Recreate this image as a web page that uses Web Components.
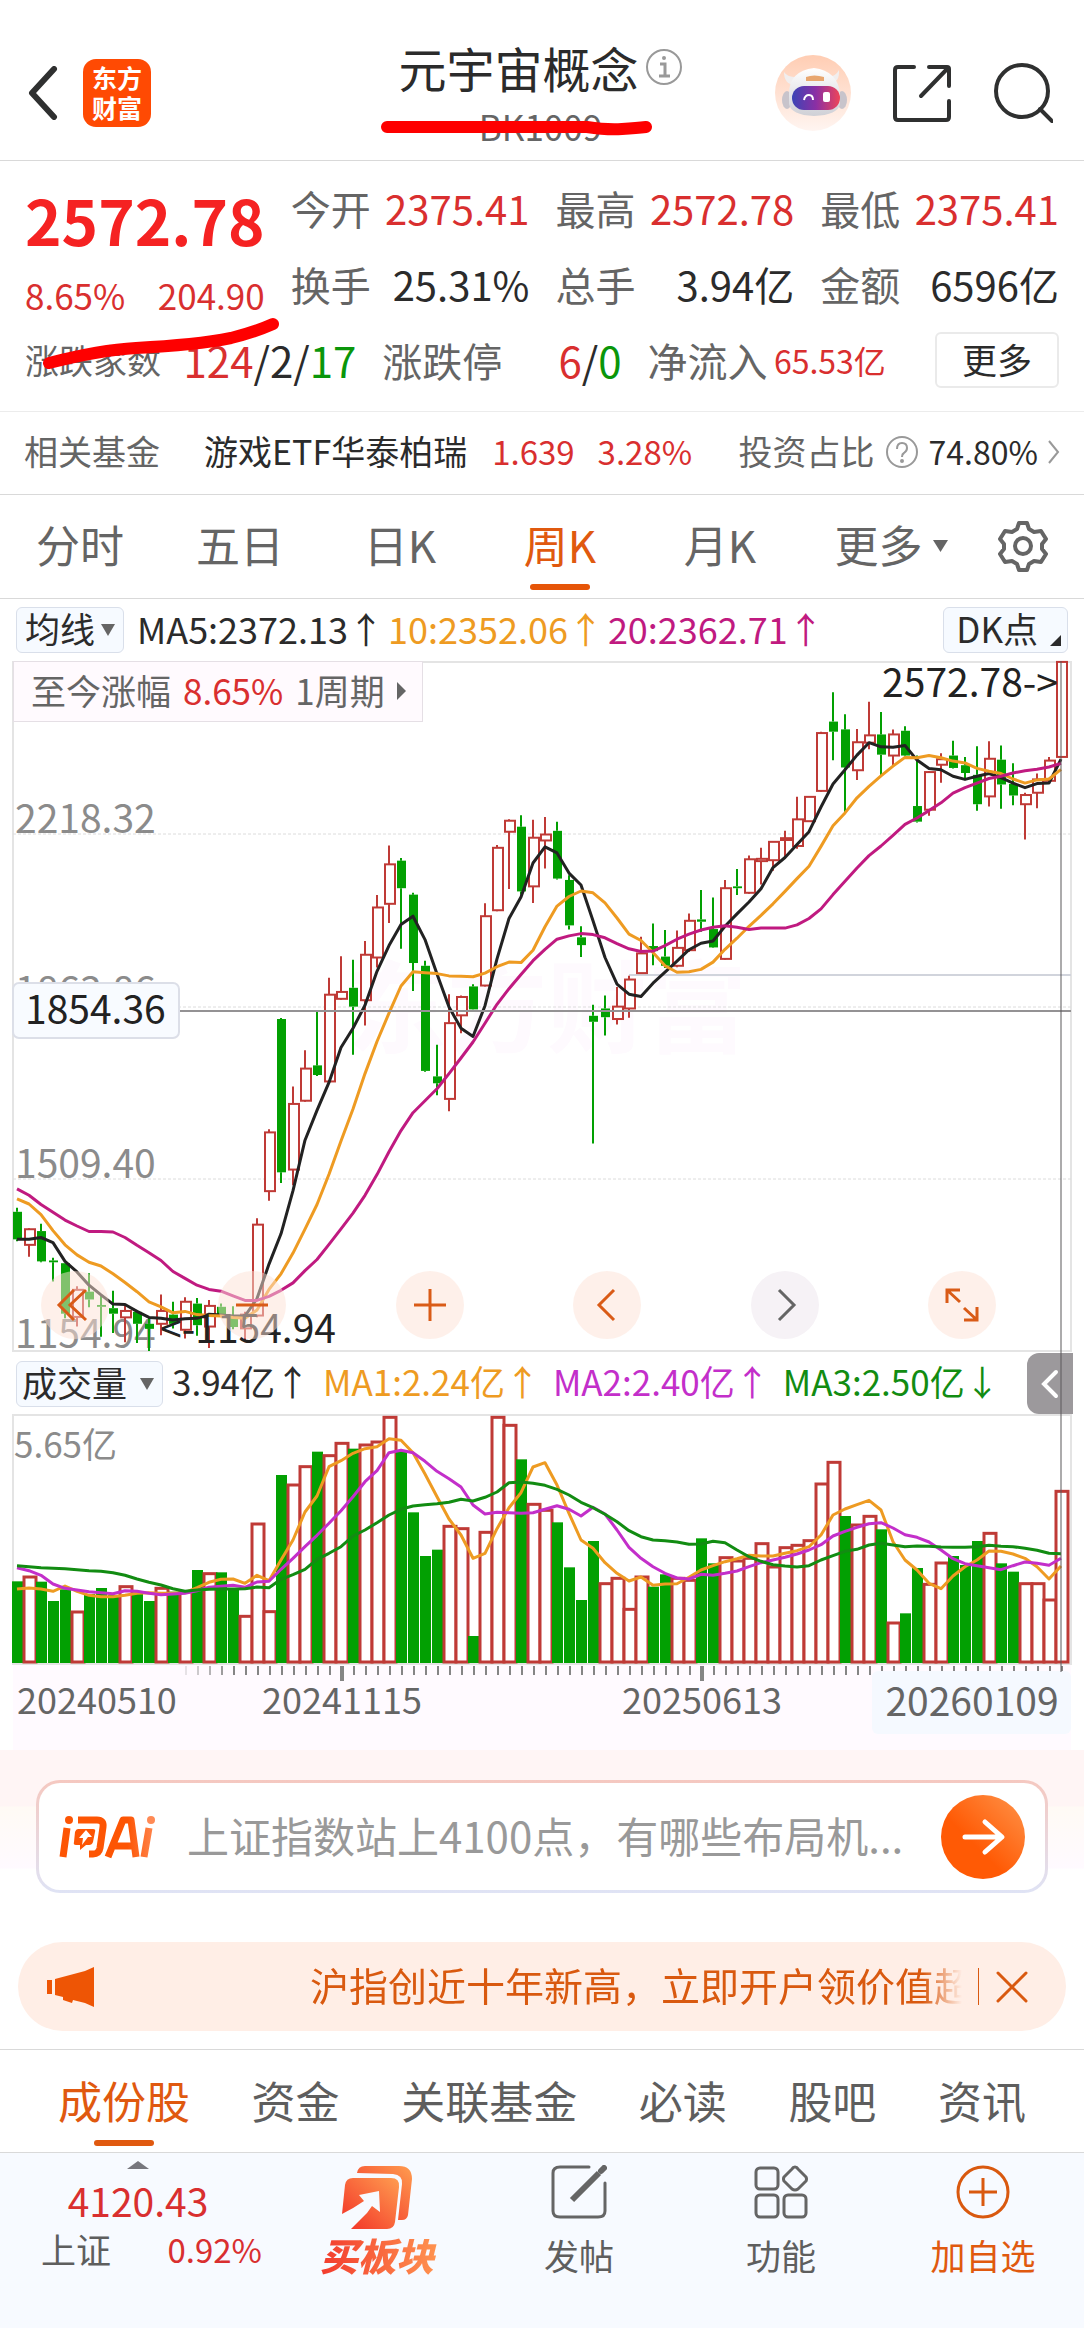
<!DOCTYPE html>
<html lang="zh-CN">
<head>
<meta charset="UTF-8">
<meta name="viewport" content="width=device-width, initial-scale=1">
<title>元宇宙概念</title>
<style>
    :root {
        --up: #d92f2f;
        --down: #0a960a;
        --text: #2b2b2b;
        --muted: #656565;
        --accent: #e0590f;
        --line: #d9d9d9;
    }

    body {
        margin: 0;
        background: #fff;
        color: var(--text);
        font-family: "Noto Sans CJK SC", sans-serif;
    }
</style>
</head>
<body>
<app-header code="BK1009">元宇宙概念</app-header>
<quote-board></quote-board>
<fund-strip></fund-strip>
<period-tabs></period-tabs>
<kline-panel></kline-panel>
<ask-bar></ask-bar>
<promo-bar>沪指创近十年新高，立即开户领价值超</promo-bar>
<section-tabs></section-tabs>
<bottom-bar></bottom-bar>

<script>
const RESET = `
    * { box-sizing: border-box; }
    button { font: inherit; color: inherit; background: none; border: 0; margin: 0; padding: 0; cursor: pointer; }
    a { color: inherit; text-decoration: none; }
    svg { display: block; flex: none; }
    .up { color: var(--up); }
    .down { color: var(--down); }
`;

class BaseElement extends HTMLElement {
    constructor() {
        super();
        this.shadow = this.attachShadow({ mode: 'open' });
    }

    connectedCallback() {
        this.shadow.innerHTML = `<style>${RESET}${this.styles()}</style>${this.render()}`;
    }

    styles() { return ''; }
    render() { return ''; }
}

class AppHeader extends BaseElement {
    styles() {
        return `
            :host { display: block; border-bottom: 1px solid var(--line); }
            header { display: grid; grid-template-columns: 1fr auto 1fr; height: 160px; padding: 0 31px 0 28px; }
            .side { display: flex; align-items: center; height: 186px; gap: 25px; }
            .side.right { justify-content: flex-end; gap: 41px; }
            .logo {
                display: grid; place-content: center; width: 68px; height: 68px; border-radius: 13px; padding-bottom: 2px;
                background: #ff4a03; color: #fff; font-size: 25px; line-height: 30px; font-weight: bold;
            }
            .middle { position: relative; text-align: center; padding-top: 37px; }
            h1 { display: flex; align-items: center; gap: 6px; margin: 0; font-size: 48px; line-height: 60px; font-weight: 400; }
            p { margin: 0; font-size: 35px; line-height: 58px; color: var(--muted); }
            .pen { position: absolute; left: -18px; top: 115px; }
        `;
    }

    render() {
        return `
            <header>
                <div class="side">
                    <button aria-label="返回"><svg width="30" height="54" viewBox="0 0 30 54" fill="none" stroke="#2f3030" stroke-width="6" stroke-linecap="round" stroke-linejoin="round"><path d="M26 3 4 27l22 24"/></svg></button>
                    <div class="logo">东方<br>财富</div>
                </div>
                <div class="middle">
                    <h1><slot></slot><svg width="38" height="38" viewBox="0 0 38 38" fill="none" stroke="#999" stroke-width="2"><circle cx="19" cy="19" r="17"/><path d="M15 16h5v12M14 28h11" stroke-width="3"/><circle cx="19" cy="10" r="1" fill="#999"/></svg></h1>
                    <p>${this.getAttribute('code')}</p>
                    <svg class="pen" width="274" height="24" viewBox="0 0 274 24" fill="none" stroke="#fe0000" stroke-width="12" stroke-linecap="round"><path d="M7 12h200q20 3 35 2t24-2"/></svg>
                </div>
                <div class="side right">
                    <svg width="76" height="76" viewBox="0 0 76 76">
                        <defs>
                            <linearGradient id="halo" x1="0" y1="0" x2="0" y2="1"><stop offset="0" stop-color="#ffcdb3"/><stop offset="1" stop-color="#fff5f1"/></linearGradient>
                            <linearGradient id="visor"><stop offset="0" stop-color="#3b45b6"/><stop offset=".5" stop-color="#8b2fa4"/><stop offset="1" stop-color="#ef4558"/></linearGradient>
                            <linearGradient id="shell" x1="0" y1="0" x2="0" y2="1"><stop offset="0" stop-color="#fff"/><stop offset="1" stop-color="#cfd0d6"/></linearGradient>
                        </defs>
                        <circle cx="38" cy="38" r="38" fill="url(#halo)"/>
                        <ellipse cx="12" cy="45" rx="5" ry="9" fill="#c8c4cb"/><ellipse cx="67" cy="45" rx="5" ry="9" fill="#c8c4cb"/>
                        <path d="M9 17q0 12 10 13l6-9Q14 24 9 17zM64 15q1 12-9 14l-5-7q10 1 14-7z" fill="#f1eeee"/>
                        <path d="M14 39q0-23 25-26 24 3 26 26v10q-2 11-26 12-23-1-25-12z" fill="url(#shell)"/>
                        <path d="M31 22q8-3 18 0v4H31z" fill="#e8a66f"/>
                        <rect x="17" y="31" width="48" height="24" rx="12" fill="url(#visor)"/>
                        <path d="M29 45q1-5 5-5t4 5" fill="none" stroke="#fff" stroke-width="2"/>
                        <rect x="48" y="37" width="7" height="10" rx="2" fill="#fff"/>
                    </svg>
                    <button aria-label="分享"><svg width="60" height="60" viewBox="0 0 60 60" fill="none" stroke="#2f3030" stroke-width="4" stroke-linecap="round" stroke-linejoin="round"><path d="M22 4H6Q3 4 3 7v47q0 3 3 3h48q3 0 3-3V38M37 4h18q2 0 2 2v17M56 5 29 33"/></svg></button>
                    <button aria-label="搜索"><svg width="60" height="60" viewBox="0 0 60 60" fill="none" stroke="#2f3030" stroke-width="4" stroke-linecap="round"><circle cx="29" cy="28" r="26"/><path d="M47 46l12 12"/></svg></button>
                </div>
            </header>
        `;
    }
}

class QuoteBoard extends BaseElement {
    styles() {
        return `
            :host { display: block; position: relative; padding: 9px 25px 13px 25px; border-bottom: 1px solid #ececec; }
            .top { display: grid; grid-template-columns: repeat(4, 1fr); column-gap: 26px; }
            .price { grid-row: span 2; }
            .last { font-size: 62px; line-height: 98px; font-weight: bold; color: #f52222; white-space: nowrap; }
            .change { display: flex; justify-content: space-between; font-size: 35px; line-height: 54px; color: var(--up); }
            dl { display: flex; justify-content: space-between; margin: 0; font-size: 40px; line-height: 76px; white-space: nowrap; }
            dt { color: var(--muted); }
            dd { margin: 0; }
            .bottom { display: grid; grid-template-columns: 331fr 239fr 238fr 147fr; column-gap: 26px; align-items: center; }
            .bottom dd { font-size: 42px; }
            .bottom dt.small { font-size: 34px; }
            .bottom dd.small { font-size: 32px; }
            .more { justify-self: end; width: 124px; height: 56px; padding-bottom: 2px; border: 2px solid #eaeaea; border-radius: 6px; font-size: 35px; line-height: 50px; }
            .pen { position: absolute; left: 40px; top: 152px; }
        `;
    }

    render() {
        const cells = [
            ['今开', '2375.41', 'up'], ['最高', '2572.78', 'up'], ['最低', '2375.41', 'up'],
            ['换手', '25.31%', ''], ['总手', '3.94亿', ''], ['金额', '6596亿', '']
        ];
        return `
            <div class="top">
                <div class="price">
                    <div class="last">2572.78</div>
                    <div class="change"><span>8.65%</span><span>204.90</span></div>
                </div>
                ${cells.map(([label, value, cls]) => `<dl><dt>${label}</dt><dd class="${cls}">${value}</dd></dl>`).join('')}
            </div>
            <div class="bottom">
                <dl><dt class="small">涨跌家数</dt><dd><span class="up">124</span>/2/<span class="down">17</span></dd></dl>
                <dl><dt>涨跌停</dt><dd><span class="up">6</span>/<span class="down">0</span></dd></dl>
                <dl><dt>净流入</dt><dd class="up small">65.53亿</dd></dl>
                <button class="more">更多</button>
            </div>
            <svg class="pen" width="246" height="64" viewBox="0 0 246 64" fill="none" stroke="#fe0000" stroke-width="12" stroke-linecap="round" stroke-linejoin="round"><path d="M9 50Q60 37 96 35q60-3 95-10 24-6 42-14"/></svg>
        `;
    }
}

class FundStrip extends BaseElement {
    styles() {
        return `
            :host { display: block; border-bottom: 1px solid var(--line); }
            a { display: flex; align-items: center; height: 82px; padding: 0 24px 5px; font-size: 34px; line-height: 48px; white-space: nowrap; }
            .name { margin: 0 25px 0 44px; }
            .num { font-size: 33px; }
            .change { margin-left: 23px; }
            .label { color: var(--muted); }
            .ratio { display: flex; align-items: center; gap: 10px; margin-left: auto; }
            .ratio svg { margin-top: 3px; }
            .ratio .num { font-size: 32px; }
        `;
    }

    render() {
        return `
            <a href="#">
                <span class="label">相关基金</span>
                <span class="name">游戏ETF华泰柏瑞</span>
                <span class="num up">1.639</span>
                <span class="num up change">3.28%</span>
                <span class="ratio">
                    <span class="label">投资占比</span>
                    <svg width="34" height="34" viewBox="0 0 34 34" fill="none" stroke="#999" stroke-width="2"><circle cx="17" cy="17" r="15"/><path d="M12 14q0-6 5-6t5 5q0 3-3 5-2 1-2 4"/><circle cx="17" cy="26" r="1"/></svg>
                    <span class="num">74.80%</span>
                    <svg width="12" height="24" viewBox="0 0 12 24" fill="none" stroke="#999" stroke-width="2"><path d="M1 1l9 11-9 11"/></svg>
                </span>
            </a>
        `;
    }
}

class PeriodTabs extends BaseElement {
    styles() {
        return `
            :host { display: block; border-bottom: 1px solid var(--line); }
            nav { display: grid; grid-template-columns: repeat(5, 160fr) 182fr 82fr; height: 103px; padding-right: 20px; font-size: 44px; color: var(--muted); }
            button { position: relative; display: flex; align-items: center; justify-content: center; gap: 10px; padding-bottom: 5px; white-space: nowrap; }
            button svg { margin-top: 3px; }
            .active { color: var(--accent); }
            .active::after { content: ""; position: absolute; bottom: 8px; width: 60px; height: 6px; border-radius: 3px; background: #e65508; }
        `;
    }

    render() {
        const tabs = ['分时', '五日', '日K', '周K', '月K'];
        return `
            <nav>
                ${tabs.map(t => `<button class="${t === '周K' ? 'active' : ''}">${t}</button>`).join('')}
                <button>更多<svg width="15" height="12" viewBox="0 0 15 12" fill="#656565"><path d="M0 0h15L7.500 12z"/></svg></button>
                <button aria-label="设置"><svg width="52" height="52" viewBox="0 0 52 52" fill="none" stroke="#656565" stroke-width="4" stroke-linejoin="round"><path d="M22 3h8l2 6 5 3 7-1 5 8-4 5v5l4 5-5 8-7-1-5 3-2 6h-8l-2-6-5-3-7 1-5-8 4-5v-5l-4-5 5-8 7 1 5-3z"/><circle cx="26" cy="26" r="8"/></svg></button>
            </nav>
        `;
    }
}

// Candles: direction (u/d), high, body top, body bottom, low
const CANDLES = `
d 1217 1226 1286 1290|u 1262 1264 1298 1324|d 1252 1268 1334 1336|d 1326 1332 1336 1378|d 1338 1338 1448 1458
u 1388 1396 1455 1476|d 1360 1400 1417 1434|d 1408 1429 1433 1498|d 1398 1436 1448 1490|u 1430 1442 1456 1510
d 1440 1444 1470 1512|d 1455 1470 1481 1529|u 1406 1442 1470 1495|d 1422 1450 1470 1480|u 1412 1422 1483 1502
d 1414 1426 1473 1496|u 1418 1431 1476 1523|d 1426 1433 1450 1455|d 1432 1455 1477 1482|u 1444 1450 1480 1510
u 1240 1254 1452 1456|u 1046 1053 1181 1202|d 804 806 1140 1163|u 953 991 1134 1168|u 874 914 984 986
d 787 907 928 930|u 716 753 942 944|u 669 747 762 764|d 677 738 779 884|u 636 666 765 820
u 536 563 672 694|u 428 469 555 597|d 455 461 521 653|d 531 535 684 745|d 679 690 919 921
d 862 931 946 972|u 752 815 980 1007|u 755 758 798 837|d 730 735 785 786|u 554 582 733 735
u 427 433 569 571|u 371 374 398 523|d 362 387 528 535|u 372 411 517 553|u 366 404 417 478
d 376 396 500 502|d 493 503 602 611|d 604 628 645 671|d 775 799 812 1077|d 755 783 802 842
u 736 779 806 818|u 712 720 783 803|u 627 663 706 708|d 598 647 658 689|d 612 670 690 695
u 613 651 690 693|u 576 592 656 660|d 525 589 594 616|d 541 610 650 651|u 503 521 675 677
d 479 517 521 536|u 450 458 531 533|u 433 457 462 513|u 418 420 460 483|u 396 412 416 455
u 322 371 429 435|u 320 322 375 377|u 180 183 309 311|d 94 158 180 242|d 142 175 258 358
u 174 203 264 285|u 115 188 204 218|d 137 186 230 277|u 175 186 232 254|d 168 178 232 234
d 232 342 376 378|u 266 268 350 363|u 227 240 252 291|d 200 232 259 260|d 235 253 270 282
d 212 274 338 352|u 201 239 321 343|d 210 241 295 348|d 249 294 319 340|u 313 318 338 415
u 271 284 313 347|u 235 243 287 290|u 26 28 235 237`.trim().split(/[|\n]/).map(row => {
    const [dir, ...v] = row.split(' ');
    return { up: dir === 'u', v: v.map(Number) };
});

const PRICE_LINES = [
    ['#222', [1286,1286,1282,1293,1334,1357,1386,1407,1427,1428,1443,1456,1458,1462,1459,1458,1449,1451,1453,1453,1415,1340,1274,1180,1070,1005,944,868,826,776,702,646,600,582,633,708,780,826,844,777,675,587,540,466,431,444,488,514,592,672,730,752,757,728,704,680,655,641,636,604,577,551,522,476,454,426,398,344,294,263,231,204,213,214,210,242,260,263,277,284,277,271,280,292,302,293,292,240]],
    ['#ee9b22', [1198,1209,1232,1267,1298,1320,1336,1344,1361,1380,1400,1422,1433,1446,1443,1450,1452,1453,1456,1458,1440,1395,1361,1316,1264,1210,1144,1072,1002,925,855,793,734,703,705,707,712,713,714,706,692,682,683,656,605,560,539,527,531,553,586,621,635,661,690,704,703,698,682,654,630,604,580,555,528,500,473,430,385,357,324,299,276,255,236,237,232,237,244,248,260,266,271,283,292,285,283,262]],
    ['#c01a80', [1176,1190,1210,1227,1244,1257,1269,1269,1270,1282,1299,1315,1332,1356,1371,1386,1395,1399,1409,1419,1419,1410,1397,1381,1354,1330,1297,1263,1229,1190,1145,1095,1049,1010,984,958,925,891,856,815,774,740,709,679,654,632,625,620,622,629,642,653,659,658,646,632,621,612,606,603,606,611,608,608,608,601,587,566,535,506,477,450,429,406,382,368,352,335,314,302,292,282,277,270,265,262,257,249]]
];

const VOLUMES = [724,708,725,783,748,813,762,744,765,737,758,783,742,755,752,690,698,697,745,826,549,812,405,432,377,335,344,307,326,312,303,229,335,517,648,629,556,563,888,574,229,253,358,490,508,547,682,780,603,728,712,805,708,740,703,712,718,595,670,650,660,652,608,678,620,613,599,429,364,528,552,526,568,846,820,684,730,666,648,675,603,577,670,695,728,728,777,451];

const VOLUME_LINES = [
    ['#ee9b22', [747,744,747,754,738,754,766,770,770,766,760,758,760,760,758,743,727,718,717,730,706,722,660,600,516,468,380,362,340,326,320,296,301,338,402,470,537,585,655,640,566,503,458,381,368,435,520,600,625,668,700,723,711,736,732,731,712,690,677,665,656,646,648,648,640,632,620,585,525,507,494,481,510,605,660,690,730,746,708,680,660,633,634,642,655,680,717,678]],
    ['#c32fca', [683,692,706,732,745,750,755,758,761,752,754,760,764,762,760,752,742,739,736,742,726,724,688,655,620,586,550,512,470,425,392,338,331,338,364,394,416,441,495,522,517,518,520,518,508,497,508,528,502,522,570,622,655,680,700,714,717,703,706,700,693,680,668,660,652,642,630,614,588,574,562,551,548,564,584,592,606,630,656,671,677,683,689,677,666,670,676,655]],
    ['#128c12', [677,680,683,685,686,689,692,694,698,706,717,727,735,746,754,750,748,747,747,746,741,743,718,704,688,658,640,620,588,570,548,525,508,498,494,491,487,478,483,472,456,428,426,430,436,448,465,487,503,523,545,572,590,600,602,606,613,612,604,608,630,650,664,674,678,681,677,660,647,634,628,615,610,615,620,618,619,621,622,622,620,616,619,620,625,631,640,641]]
];

const UP_STROKE = '#bf3a36';
const DOWN_FILL = '#02a002';
const STEP = 12;
const centerX = i => 4 + i * STEP;

function polylines(lines, y) {
    return lines.map(([color, values]) =>
        `<polyline fill="none" stroke="${color}" stroke-width="3" stroke-linejoin="round" points="${values.map((v, i) => `${centerX(i)},${y(v).toFixed(1)}`).join(' ')}"/>`
    ).join('');
}

class KlineChart extends BaseElement {
    styles() {
        return `
            :host { display: block; position: relative; }
            svg { width: 100%; height: auto; overflow: visible; }
            text { font-size: 39px; }
            .since {
                position: absolute; left: 0; top: 0; display: flex; align-items: center; gap: 12px;
                height: 61px; padding: 0 16px 5px 17px; border: 1px solid #e5dfe5; background: #fffafe;
                font-size: 35px; color: var(--muted); white-space: nowrap;
            }
            .since svg { width: 9px; margin-top: 4px; }
            .tools { position: absolute; left: 28px; right: 75px; bottom: 13px; display: flex; justify-content: space-between; }
            .tools button { display: grid; place-items: center; width: 68px; height: 68px; border-radius: 50%; background: rgba(253, 226, 214, .5); }
            .tools .off { background: #f6f2f6; }
            .tools svg { width: 40px; height: 40px; }
        `;
    }

    candle({ up, v }, i) {
        const y = n => (n - 26) * 0.459;
        const x = centerX(i);
        const [high, top, bottom, low] = v.map(y);
        const color = up ? UP_STROKE : DOWN_FILL;
        const height = Math.max(bottom - top, 1);
        const wicks = `<path d="M${x} ${high}V${top}M${x} ${bottom}V${low}" stroke="${color}" stroke-width="2"/>`;
        const body = up
            ? `<rect x="${x - 4}" y="${top}" width="10" height="${height}" fill="#fff" stroke="${color}" stroke-width="2"/>`
            : `<rect x="${x - 4}" y="${top}" width="9" height="${height}" fill="${color}"/>`;
        return wicks + body;
    }

    render() {
        const y = n => (n - 26) * 0.459;
        const icon = d => `<svg viewBox="0 0 40 40" fill="none" stroke="#d95b17" stroke-width="3">${d}</svg>`;
        return `
            <svg viewBox="0 0 1058 691">
                <path d="M0 1H1058V690H0z" fill="#fff" stroke="#e4e4e4" stroke-width="2"/>
                <text x="334" y="384" style="font-size:100px;font-weight:bold" fill="#fefafe" aria-hidden="true">东方财富</text>
                <path d="M0 173H1058M0 346H1058M0 518H1058" stroke="#dcdcdc" stroke-dasharray="3 2"/>
                <g fill="#8b8b8b">
                    <text x="2" y="172">2218.32</text>
                    <text x="2" y="344">1863.86</text>
                    <text x="2" y="517">1509.40</text>
                    <text x="2" y="687">1154.94</text>
                </g>
                <path d="M616 314H1058" stroke="#d1d4dc" stroke-width="2"/>
                ${CANDLES.map((c, i) => this.candle(c, i)).join('')}
                ${polylines(PRICE_LINES, y)}
                <path d="M166 350H1058" stroke="#949294" stroke-width="2"/>
                <rect x="0" y="322" width="166" height="55" rx="6" fill="#f8fbff" stroke="#dcdfe8" stroke-width="2"/>
                <text x="12" y="363" fill="#222">1854.36</text>
                <text x="1045" y="36" text-anchor="end" fill="#222">2572.78-&gt;</text>
                <text x="323" y="682" text-anchor="end" fill="#222">&lt;-1154.94</text>
            </svg>
            <div class="since">
                <span>至今涨幅</span><span class="up">8.65%</span><span>1周期</span>
                <svg viewBox="0 0 9 18" fill="#656565"><path d="M0 0l9 9-9 9z"/></svg>
            </div>
            <div class="tools">
                <button aria-label="最早">${icon('<path d="M19 5 4 20l15 15M31 5 15 20l16 15"/>')}</button>
                <button aria-label="缩小">${icon('<path d="M4 20h32"/>')}</button>
                <button aria-label="放大">${icon('<path d="M4 20h32M20 4v32"/>')}</button>
                <button aria-label="左移">${icon('<path d="M27 5 12 20l15 15"/>')}</button>
                <button class="off" aria-label="右移"><svg viewBox="0 0 40 40" fill="none" stroke="#656565" stroke-width="3"><path d="M14 5l15 15-15 15"/></svg></button>
                <button aria-label="全屏">${icon('<path d="M5 18V5h13M5 5l13 12M35 22v13H22M35 35 22 23"/>')}</button>
            </div>
        `;
    }
}

class VolumeChart extends BaseElement {
    styles() {
        return `
            :host { display: block; }
            svg { width: 100%; height: auto; overflow: visible; }
            text { font-size: 36px; fill: #656565; }
        `;
    }

    render() {
        const y = n => (n - 225) / 3;
        const base = 247;
        // these closed above the previous week although the candle is green
        const risen = [49, 60, 68];
        const bars = VOLUMES.map((n, i) => {
            const x = centerX(i);
            return CANDLES[i].up || risen.includes(i)
                ? `<rect x="${x - 5}" y="${y(n) + 1}" width="12" height="${base - y(n) - 1}" fill="#fff" stroke="${UP_STROKE}" stroke-width="3"/>`
                : `<rect x="${x - 5}" y="${y(n)}" width="11" height="${base - y(n) + 1}" fill="${DOWN_FILL}"/>`;
        }).join('');
        let ticks = '';
        for (let i = 14; i < 88; i++) {
            const major = i === 27 || i === 57;
            ticks += `<path d="M${centerX(i) + 1} 251v${major ? 15 : 9}" stroke="#858585" stroke-width="${major ? 4 : 2}" opacity="${Math.min(1, (i - 13) / 5)}"/>`;
        }
        return `
            <svg viewBox="0 0 1058 335">
                <rect y="249" width="1058" height="86" fill="#fffaff"/>
                <path d="M0 0H1058V249H0z" fill="#fff" stroke="#e4e4e4" stroke-width="2"/>
                <text x="1" y="43" style="font-size:35px;fill:#8b8b8b">5.65亿</text>
                ${bars}
                ${polylines(VOLUME_LINES, y)}
                ${ticks}
                <rect x="859" y="256" width="199" height="63" rx="6" fill="#f5f9ff"/>
                <text x="4" y="299">20240510</text>
                <text x="329" y="299" text-anchor="middle">20241115</text>
                <text x="689" y="299" text-anchor="middle">20250613</text>
                <text x="959" y="301" text-anchor="middle" style="font-size:39px">20260109</text>
            </svg>
        `;
    }
}

class KlinePanel extends BaseElement {
    styles() {
        return `
            :host { display: block; padding: 0 13px; }
            .row { display: flex; align-items: center; height: 62px; padding: 0 3px; font-size: 36px; line-height: 44px; white-space: nowrap; }
            .row.volume { position: relative; height: 63px; font-size: 35px; }
            .row span { margin-left: 4px; padding-bottom: 5px; }
            .row.volume span { margin-left: 13px; }
            .row.volume span.first { margin-left: 9px; }
            .pick { display: flex; align-items: center; gap: 6px; height: 46px; padding: 0 8px 4px; border: 1px solid #d9dfea; border-radius: 6px; background: #f6faff; font-size: 35px; }
            .pick svg { margin-top: 4px; }
            .volume .pick { gap: 13px; padding: 0 8px 4px 5px; }
            .row span.ma5 { margin-left: 13px; }
            .ma10, .v1 { color: #ee9b22; }
            .ma20 { color: #c01a80; }
            .v2 { color: #c32fca; }
            .v3 { color: #128c12; }
            .dk { margin-left: auto; padding: 0 6px 4px 12px; gap: 12px; }
            .dk svg { align-self: flex-end; margin-bottom: 2px; }
            .fold { position: absolute; right: -2px; top: 1px; display: grid; place-items: center; width: 46px; height: 61px; border-radius: 12px 0 0 12px; background: #9c999c; }
            .charts { position: relative; }
            .charts::after { content: ""; position: absolute; right: 9px; top: 0; bottom: 78px; width: 2px; background: rgba(90, 88, 90, .5); }
        `;
    }

    render() {
        const caret = '<svg width="14" height="12" viewBox="0 0 14 12" fill="#656565"><path d="M0 0h14L7 12z"/></svg>';
        return `
            <div class="row">
                <button class="pick">均线${caret}</button>
                <span class="ma5">MA5:2372.13↑</span>
                <span class="ma10">10:2352.06↑</span>
                <span class="ma20">20:2362.71↑</span>
                <button class="pick dk">DK点<svg width="11" height="11" viewBox="0 0 11 11"><path d="M11 0v11H0z" fill="#2b2b2b"/></svg></button>
            </div>
            <div class="charts">
                <kline-chart></kline-chart>
                <div class="row volume">
                    <button class="pick">成交量${caret}</button>
                    <span class="first">3.94亿↑</span>
                    <span class="v1">MA1:2.24亿↑</span>
                    <span class="v2">MA2:2.40亿↑</span>
                    <span class="v3">MA3:2.50亿↓</span>
                    <button class="fold" aria-label="展开"><svg width="18" height="30" viewBox="0 0 18 30" fill="none" stroke="#fff" stroke-width="4" stroke-linecap="round"><path d="M15 3 3 15l12 12"/></svg></button>
                </div>
                <volume-chart></volume-chart>
            </div>
        `;
    }
}

class AskBar extends BaseElement {
    styles() {
        return `
            :host { display: block; padding: 30px 36px 49px; background: linear-gradient(#fff5f5 0 56px, #fffaf5 57px, #fffaff 118px, #fff 119px); }
            form {
                display: flex; align-items: center; height: 113px; padding: 0 20px; border: 3px solid transparent; border-radius: 24px;
                background: linear-gradient(#fff, #fff) padding-box, linear-gradient(#f5c8c0, #dfe3f5) border-box;
            }
            input {
                flex: 1; min-width: 0; margin: 0 26px 0 30px; padding: 0 0 5px; border: 0; outline: 0; background: none;
                font: inherit; font-size: 42px; line-height: 60px; height: 65px; text-overflow: ellipsis; color: #999;
            }
            input::placeholder { color: #999; opacity: 1; }
        `;
    }

    render() {
        return `
            <form>
                <svg width="98" height="44" viewBox="0 0 98 44" role="img" aria-label="问Ai">
                    <defs><linearGradient id="g" gradientUnits="userSpaceOnUse" x1="0" y1="0" x2="98" y2="0"><stop offset=".7" stop-color="#fd5504"/><stop offset="1" stop-color="#ff8a55"/></linearGradient></defs>
                    <g fill="none" stroke="url(#g)" stroke-width="7" stroke-linejoin="round">
                        <path d="M8 13 4 42M19 5h19q7 0 6 7l-3 21q-1 6-7 6h-4"/>
                        <path d="M49 42 64 5h8l5 37M56 31h19M90 13l-5 29"/>
                    </g>
                    <circle cx="10" cy="5" r="4" fill="#fd5504"/><circle cx="92" cy="5" r="4" fill="#ff8a55"/>
                    <path d="M19 14h15q3 0 2 3l-2 10q-1 3-4 3h-3l-6 5v-5h-4q-3 0-2-3l1-10q1-3 3-3z" fill="#fd5504"/>
                    <path d="M27 15l6 7h-4l-6 8 1-7h-4z" fill="#fff"/>
                </svg>
                <input type="text" aria-label="问Ai" placeholder="上证指数站上4100点，有哪些布局机...">
                <button type="button" aria-label="发送"><svg width="84" height="84" viewBox="0 0 84 84">
                    <defs><linearGradient id="b" x1="0" y1="1" x2="1" y2="0"><stop offset=".4" stop-color="#ff5a05"/><stop offset="1" stop-color="#ff944a"/></linearGradient></defs>
                    <circle cx="42" cy="42" r="42" fill="url(#b)"/>
                    <path d="M24 42h36M44 27l17 15-17 15" fill="none" stroke="#fff" stroke-width="5" stroke-linecap="round" stroke-linejoin="round"/>
                </svg></button>
            </form>
        `;
    }
}

class PromoBar extends BaseElement {
    styles() {
        return `
            :host { display: block; padding: 0 18px 18px; }
            div { display: flex; align-items: center; height: 89px; padding: 0 38px 0 29px; border-radius: 45px; background: #ffeee6; color: #d9590f; }
            a { flex: 1; min-width: 0; margin: 0 16px 0 216px; padding-bottom: 5px; overflow: hidden; white-space: nowrap; font-size: 39px; line-height: 56px; -webkit-mask: linear-gradient(90deg, #000 94%, transparent); mask: linear-gradient(90deg, #000 94%, transparent); }
            hr { width: 1px; height: 37px; margin: 0 17px 0 0; border: 0; background: #d9590f; }
        `;
    }

    render() {
        return `
            <div>
                <svg width="47" height="40" viewBox="0 0 47 40" fill="#ee5505"><path d="M0 13h5v14H0zM8 12 38 4l9-4v40l-9-4-12-3-1 3-9-3v-3l-8-2z"/></svg>
                <a href="#"><slot></slot></a>
                <hr>
                <button aria-label="关闭"><svg width="32" height="32" viewBox="0 0 32 32" fill="none" stroke="#d9590f" stroke-width="3" stroke-linecap="round"><path d="M2 2l28 28M30 2 2 30"/></svg></button>
            </div>
        `;
    }
}

class SectionTabs extends BaseElement {
    styles() {
        return `
            :host { display: block; border: solid var(--line); border-width: 1px 0; }
            nav { display: flex; justify-content: space-between; height: 102px; padding: 0 58px; font-size: 44px; color: #5e5e5e; }
            a { position: relative; display: flex; align-items: center; justify-content: center; padding-bottom: 3px; }
            .active { color: var(--accent); }
            .active::after { content: ""; position: absolute; bottom: 6px; width: 60px; height: 6px; border-radius: 3px; background: #e0590f; }
        `;
    }

    render() {
        const tabs = ['成份股', '资金', '关联基金', '必读', '股吧', '资讯'];
        return `<nav>${tabs.map((t, i) => `<a href="#" class="${i ? '' : 'active'}">${t}</a>`).join('')}</nav>`;
    }
}

class BottomBar extends BaseElement {
    styles() {
        return `
            :host { display: grid; grid-template-columns: 276fr repeat(4, 202fr); height: 175px; background: #f7faff; font-size: 35px; line-height: 44px; color: #5e5e5e; }
            .index { display: flex; flex-direction: column; align-items: center; padding-top: 8px; }
            .index b { font-size: 39px; line-height: 62px; font-weight: 400; color: var(--up); }
            .index p { display: flex; justify-content: space-between; align-self: stretch; margin: 0; padding: 0 14px 0 41px; line-height: 36px; }
            .index p .up { font-size: 33px; }
            button { display: flex; flex-direction: column; align-items: center; gap: 14px; padding-top: 12px; }
            button.buy { gap: 2px; }
            .buy span { padding: 0 4px; font-size: 38px; font-weight: 900; font-style: italic; background: linear-gradient(90deg, #f2382c, #ff9350); -webkit-background-clip: text; background-clip: text; color: transparent; }
            .add { color: var(--accent); }
        `;
    }

    render() {
        return `
            <a class="index" href="#">
                <svg width="22" height="8" viewBox="0 0 22 8" fill="#77777d"><path d="M11 0l11 8H0z"/></svg>
                <b>4120.43</b>
                <p><span>上证</span><span class="up">0.92%</span></p>
            </a>
            <button class="buy">
                <svg width="72" height="66" viewBox="0 0 72 66">
                    <defs><linearGradient id="c" x1="0" y1="1" x2="1" y2="0"><stop offset="0" stop-color="#f22f26"/><stop offset="1" stop-color="#ff9d50"/></linearGradient></defs>
                    <path d="M16 8q1-7 8-7h34q13 0 13 13l-4 36q-1 5-6 5h-4l4-36q1-9-9-10z" fill="url(#c)"/>
                    <path d="M4 20q1-7 8-7h38q9 0 8 9l-4 35q-1 7-8 7H10l16-16 5-7 8 6-1-21-20 4 5 6Q13 43 1 49z" fill="url(#c)"/>
                </svg>
                <span>买板块</span>
            </button>
            <button>
                <svg width="56" height="54" viewBox="0 0 56 54" fill="none" stroke="#656565" stroke-width="3" stroke-linecap="round"><path d="M38 2H9Q2 2 2 8v38q0 6 7 6h38q7 0 7-6V18"/><path d="M21 35 48 8" stroke-width="6" stroke-linecap="butt"/><path d="M50 6l3-3" stroke-width="6"/></svg>
                <span>发帖</span>
            </button>
            <button>
                <svg width="54" height="54" viewBox="0 0 54 54" fill="none" stroke="#656565" stroke-width="3" stroke-linejoin="round"><rect x="2" y="3" width="22" height="21" rx="4"/><rect x="2" y="30" width="22" height="22" rx="4"/><rect x="30" y="30" width="22" height="22" rx="4"/><path d="M41 2q2 0 3 2l8 8q1 2 0 4l-8 8q-3 2-6 0l-8-8q-1-2 0-4l8-8q1-2 3-2z"/></svg>
                <span>功能</span>
            </button>
            <button class="add">
                <svg width="56" height="54" viewBox="0 0 56 54" fill="none" stroke="#d9590f" stroke-width="3"><circle cx="28" cy="27" r="25"/><path d="M14 27h28M28 13v28"/></svg>
                <span>加自选</span>
            </button>
        `;
    }
}

customElements.define('app-header', AppHeader);
customElements.define('quote-board', QuoteBoard);
customElements.define('fund-strip', FundStrip);
customElements.define('period-tabs', PeriodTabs);
customElements.define('kline-chart', KlineChart);
customElements.define('volume-chart', VolumeChart);
customElements.define('kline-panel', KlinePanel);
customElements.define('ask-bar', AskBar);
customElements.define('promo-bar', PromoBar);
customElements.define('section-tabs', SectionTabs);
customElements.define('bottom-bar', BottomBar);
</script>
</body>
</html>
